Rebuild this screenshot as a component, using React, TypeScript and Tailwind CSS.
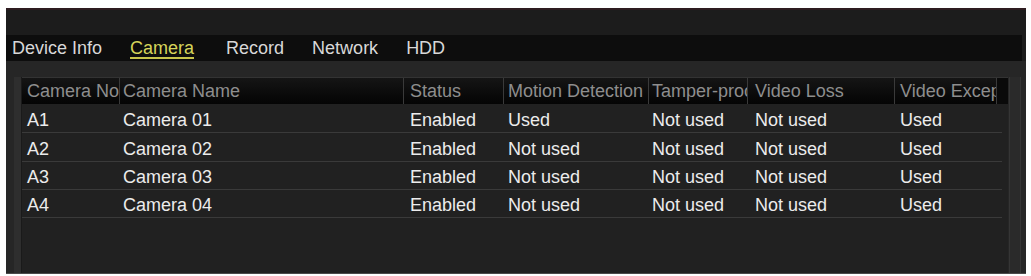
import React from 'react'

const TABS = ['Device Info', 'Camera', 'Record', 'Network', 'HDD']

// column widths + left text padding, taken from the screenshot
const COLS = [
  { title: 'Camera No', w: 'w-[98px]', pad: 'pl-[5px]' },
  { title: 'Camera Name', w: 'w-[284px]', pad: 'pl-[3px]' },
  { title: 'Status', w: 'w-[100px]', pad: 'pl-[6px]' },
  { title: 'Motion Detection', w: 'w-[145px]', pad: 'pl-[4px]' },
  { title: 'Tamper-proof', w: 'w-[99px]', pad: 'pl-[3px]' },
  { title: 'Video Loss', w: 'w-[147px]', pad: 'pl-[7px]' },
  { title: 'Video Exception', w: 'w-[102px]', pad: 'pl-[5px]' },
]

const ROWS = [
  ['A1', 'Camera 01', 'Enabled', 'Used', 'Not used', 'Not used', 'Used'],
  ['A2', 'Camera 02', 'Enabled', 'Not used', 'Not used', 'Not used', 'Used'],
  ['A3', 'Camera 03', 'Enabled', 'Not used', 'Not used', 'Not used', 'Used'],
  ['A4', 'Camera 04', 'Enabled', 'Not used', 'Not used', 'Not used', 'Used'],
]

export default function App() {
  return (
    <div className="bg-white w-[1031px] h-[276px] pt-2 pl-[6px] font-['Liberation_Sans',Arial,sans-serif] text-[18px] leading-none">
      <div className="w-[1020px] h-[266px] bg-[#1c1c1c] border-t-2 border-[#2e1c20] border-b border-b-[#4a4a4a] flex flex-col">
        <div className="h-[25px] shrink-0" />

        {/* tab strip */}
        <div className="h-[26px] shrink-0 mr-[4px] bg-[#0d0d0d] flex items-center">
          {TABS.map(t => (
            <div key={t} className={`px-[6px] ${t === 'Camera' ? 'mr-[20px]' : 'mr-[16px]'} h-full flex items-center relative`}>
              <span className={t === 'Camera' ? 'text-[#d6d45a]' : 'text-[#d8d8d8]'}>{t}</span>
              {t === 'Camera' && <span className="absolute left-[6px] right-[6px] bottom-[2px] h-[2px] bg-[#c8c44c]" />}
            </div>
          ))}
        </div>

        {/* table frame */}
        <div className="flex-1 bg-[#262626] pt-[16px] pl-[8px] pr-[5px] flex">
          <div className="w-[8px] bg-[#2e2e2e] border-r border-[#1a1a1a]" />
          <div className="flex-1 bg-[#212121] flex flex-col">
            <div className="h-[27px] flex bg-gradient-to-b from-[#151515] to-[#050505] border-t border-[#333]">
              {COLS.map(c => (
                <div key={c.title} className={`${c.w} ${c.pad} shrink-0 h-full flex items-center overflow-hidden whitespace-nowrap border-r border-[#3a3a3a] text-[#8e8e8e]`}>
                  {c.title}
                </div>
              ))}
              <div className="flex-1 bg-[#0a0a0a]" />
            </div>
            {ROWS.map((r, i) => (
              <div key={r[0]} className={`${i < 2 ? 'h-[29px]' : 'h-[28px]'} flex items-center border-b border-[#3a3a3a] mr-[6px]`}>
                {r.map((v, j) => (
                  <div key={j} className={`${COLS[j].w} ${COLS[j].pad} shrink-0 pt-[3px] whitespace-nowrap text-[#ececec]`}>{v}</div>
                ))}
              </div>
            ))}
          </div>
          <div className="w-[12px] ml-[1px] bg-[#2a2a2a] border-l border-r border-[#353535]" />
        </div>
      </div>
    </div>
  )
}
